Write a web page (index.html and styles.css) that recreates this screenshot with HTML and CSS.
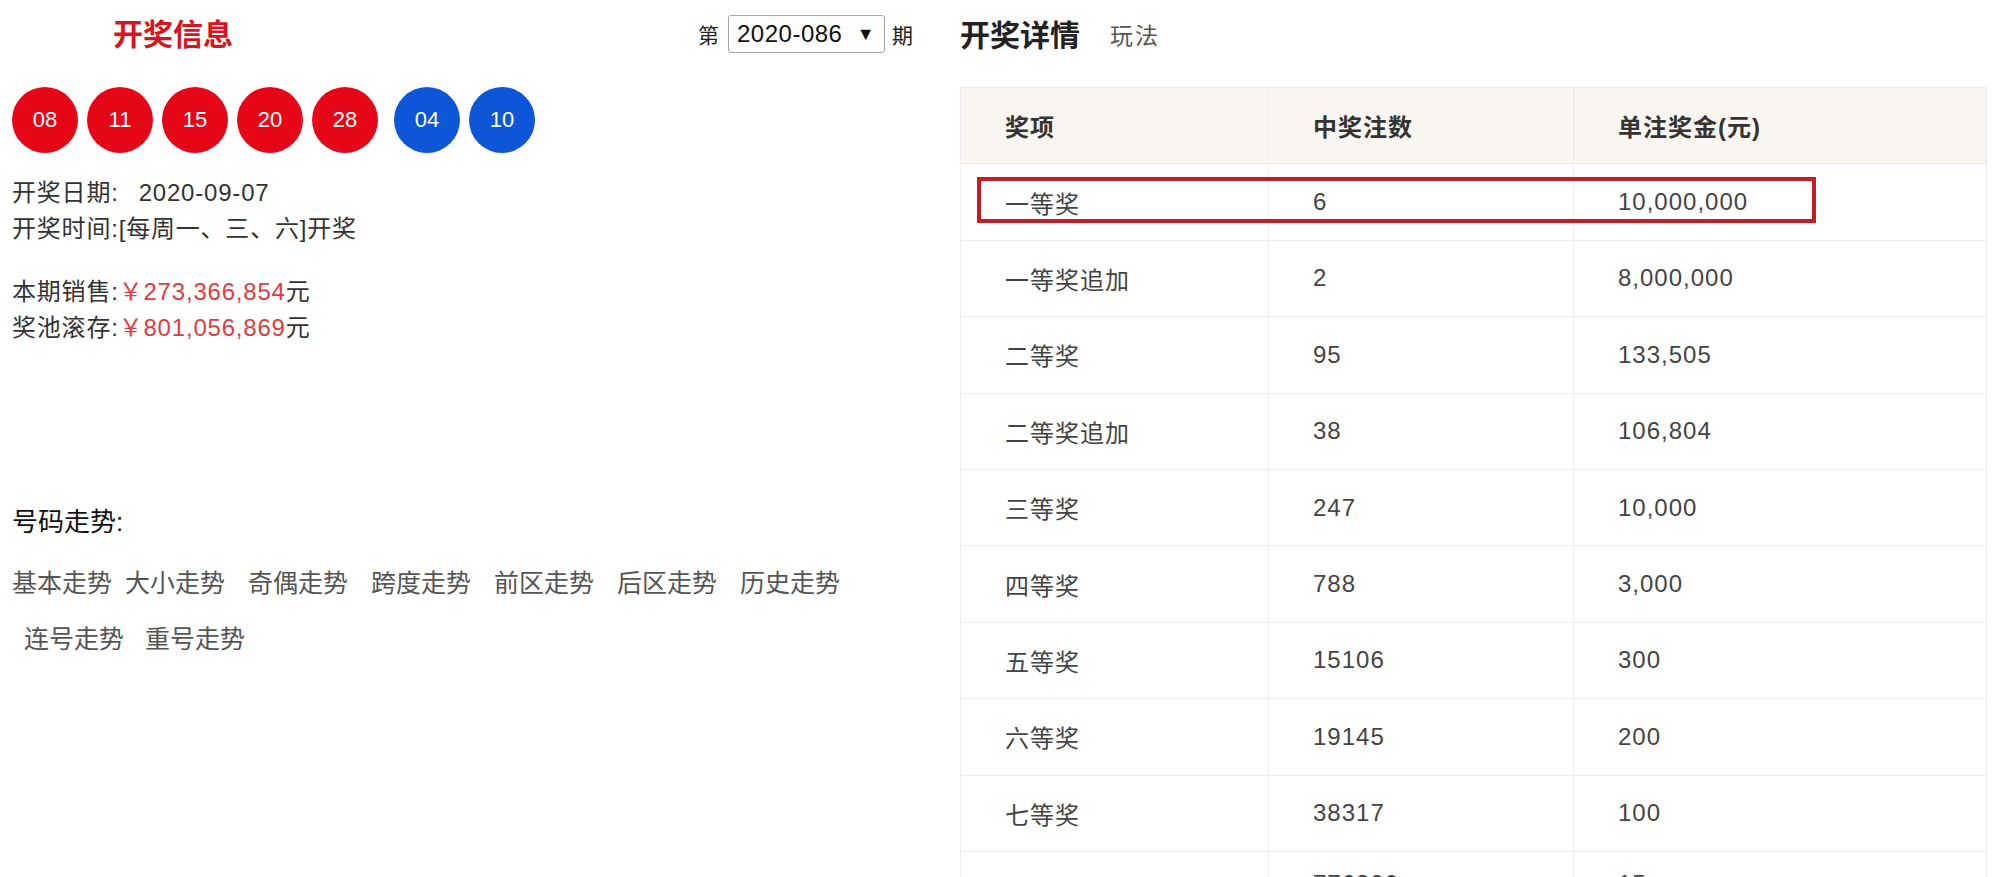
FILE: index.html
```html
<!DOCTYPE html>
<html lang="zh-CN">

<head>
    <meta charset="utf-8">
    <meta name="viewport" content="width=device-width, initial-scale=1">
    <title>开奖信息</title>

    <link rel="stylesheet" href="styles.css">
</head>

<body>
    <div class="out">
        <!-- 左侧开奖信息 -->
        <div class="info_out">
            <div class="info_head">
                <h2 class="info_tit">开奖信息</h2>
                <div class="issue">
                    <font>第</font>
                    <span class="issue_sel">2020-086<i>▼</i></span>
                    <font>期</font>
                </div>
            </div>
            <ul class="balls">
                <li class="red">08</li>
                <li class="red">11</li>
                <li class="red">15</li>
                <li class="red">20</li>
                <li class="red">28</li>
                <li class="blue">04</li>
                <li class="blue">10</li>
            </ul>
            <div class="info_txt">
                <p>开奖日期:<span class="date">2020-09-07</span></p>
                <p>开奖时间:[每周一、三、六]开奖</p>
            </div>
            <div class="info_money">
                <p>本期销售:<span class="num">￥273,366,854</span>元</p>
                <p>奖池滚存:<span class="num">￥801,056,869</span>元</p>
            </div>
            <div class="trend">
                <h3>号码走势:</h3>
                <div class="trend_row">
                    <a>基本走势</a>
                    <a>大小走势</a>
                    <a>奇偶走势</a>
                    <a>跨度走势</a>
                    <a>前区走势</a>
                    <a>后区走势</a>
                    <a>历史走势</a>
                </div>
                <div class="trend_row second">
                    <a>连号走势</a>
                    <a>重号走势</a>
                </div>
            </div>
        </div>

        <!-- 右侧开奖详情 -->
        <div class="detail_out">
            <div class="detail_head">
                <h2>开奖详情</h2>
                <a>玩法</a>
            </div>
            <div class="tab_out">
                <table class="tab">
                    <colgroup>
                        <col width="308">
                        <col width="305">
                        <col>
                    </colgroup>
                    <tr>
                        <th>奖项</th>
                        <th>中奖注数</th>
                        <th>单注奖金(元)</th>
                    </tr>
                    <tr>
                        <td>一等奖</td>
                        <td>6</td>
                        <td>10,000,000</td>
                    </tr>
                    <tr>
                        <td>一等奖追加</td>
                        <td>2</td>
                        <td>8,000,000</td>
                    </tr>
                    <tr>
                        <td>二等奖</td>
                        <td>95</td>
                        <td>133,505</td>
                    </tr>
                    <tr>
                        <td>二等奖追加</td>
                        <td>38</td>
                        <td>106,804</td>
                    </tr>
                    <tr>
                        <td>三等奖</td>
                        <td>247</td>
                        <td>10,000</td>
                    </tr>
                    <tr>
                        <td>四等奖</td>
                        <td>788</td>
                        <td>3,000</td>
                    </tr>
                    <tr>
                        <td>五等奖</td>
                        <td>15106</td>
                        <td>300</td>
                    </tr>
                    <tr>
                        <td>六等奖</td>
                        <td>19145</td>
                        <td>200</td>
                    </tr>
                    <tr>
                        <td>七等奖</td>
                        <td>38317</td>
                        <td>100</td>
                    </tr>
                    <tr>
                        <td>八等奖</td>
                        <td>776390</td>
                        <td>15</td>
                    </tr>
                </table>
                <!-- 标注框 -->
                <div class="mark"></div>
            </div>
        </div>
    </div>
</body>

</html>
```

FILE: styles.css
```css
* {
    padding: 0;
    margin: 0;
    box-sizing: border-box;
}

html,
body {
    font-family: "Liberation Sans", "Noto Sans CJK SC", sans-serif;
    font-size: 24px;
    color: #333;
    background: #fff;
    overflow: hidden;
}

ul,
li {
    list-style: none;
}

a {
    cursor: pointer;
}

.out {
    display: flex;
    padding-left: 12px;
}

.info_out {
    width: 901px;
    flex-shrink: 0;
}

.info_head {
    height: 68px;
    display: flex;
    align-items: center;
    justify-content: space-between;
}

.info_tit {
    padding-left: 101px;
    font-size: 30px;
    font-weight: bold;
    color: #d8141c;
    margin-top: -4px;
}

.issue {
    display: flex;
    align-items: center;
    font-size: 21px;
    color: #222;
}

.issue_sel {
    display: flex;
    align-items: center;
    justify-content: space-between;
    width: 157px;
    height: 38px;
    margin: 0 7px 0 9px;
    padding: 0 9px 0 8px;
    border: 1px solid #a6a6a6;
    border-radius: 3px;
    font-size: 24px;
    letter-spacing: 0.5px;
    color: #111;
}

.issue_sel i {
    font-style: normal;
    font-size: 18px;
}

.balls {
    display: flex;
    margin-top: 19px;
}

.balls li {
    width: 66px;
    height: 66px;
    margin-right: 9px;
    border-radius: 50%;
    display: flex;
    align-items: center;
    justify-content: center;
    font-size: 22px;
    color: #fff;
}

.balls li.red {
    background: #e50617;
}

.balls li.blue {
    background: #0d56d8;
}

.balls li.red + li.blue {
    margin-left: 7px;
}

.info_txt {
    margin-top: 22px;
    line-height: 36px;
    letter-spacing: 0.8px;
}

.info_txt .date {
    margin-left: 20px;
}

.info_money {
    margin-top: 27px;
    line-height: 36px;
    letter-spacing: 0.8px;
}

.info_money .num {
    color: #e4393f;
}

.trend {
    margin-top: 156px;
}

.trend h3 {
    font-size: 26px;
    font-weight: normal;
    line-height: 40px;
    color: #111;
}

.trend_row {
    display: flex;
    margin-top: 21px;
    line-height: 40px;
}

.trend_row.second {
    margin-top: 16px;
    padding-left: 12px;
}

.trend_row a {
    font-size: 25px;
    color: #555;
    margin-right: 23px;
}

.trend_row a:first-child {
    margin-right: 13px;
}

.trend_row.second a:first-child {
    margin-right: 21px;
}

.detail_out {
    width: 1027px;
    margin-left: 47px;
    flex-shrink: 0;
}

.detail_head {
    height: 68px;
    display: flex;
    align-items: center;
}

.detail_head h2 {
    font-size: 30px;
    font-weight: bold;
    color: #222;
    margin-top: -2px;
}

.detail_head a {
    margin-left: 30px;
    font-size: 23px;
    letter-spacing: 2px;
    color: #555;
}

.tab_out {
    position: relative;
    margin-top: 19px;
}

.tab {
    width: 100%;
    border-collapse: collapse;
    table-layout: fixed;
    border: 1px solid #ededed;
}

.tab th,
.tab td {
    height: 76.4px;
    padding: 0 0 0 44px;
    border: 1px solid #ededed;
    text-align: left;
    font-size: 24px;
    letter-spacing: 1px;
}

.tab th {
    background: #f9f6f1;
    font-weight: bold;
    color: #333;
}

.tab td {
    font-weight: normal;
    color: #444;
}

.tab tr:last-child td {
    vertical-align: top;
    padding-top: 18px;
}

.mark {
    position: absolute;
    left: 17px;
    top: 90px;
    width: 839px;
    height: 46px;
    border: 4px solid #cc1a23;
}
```
